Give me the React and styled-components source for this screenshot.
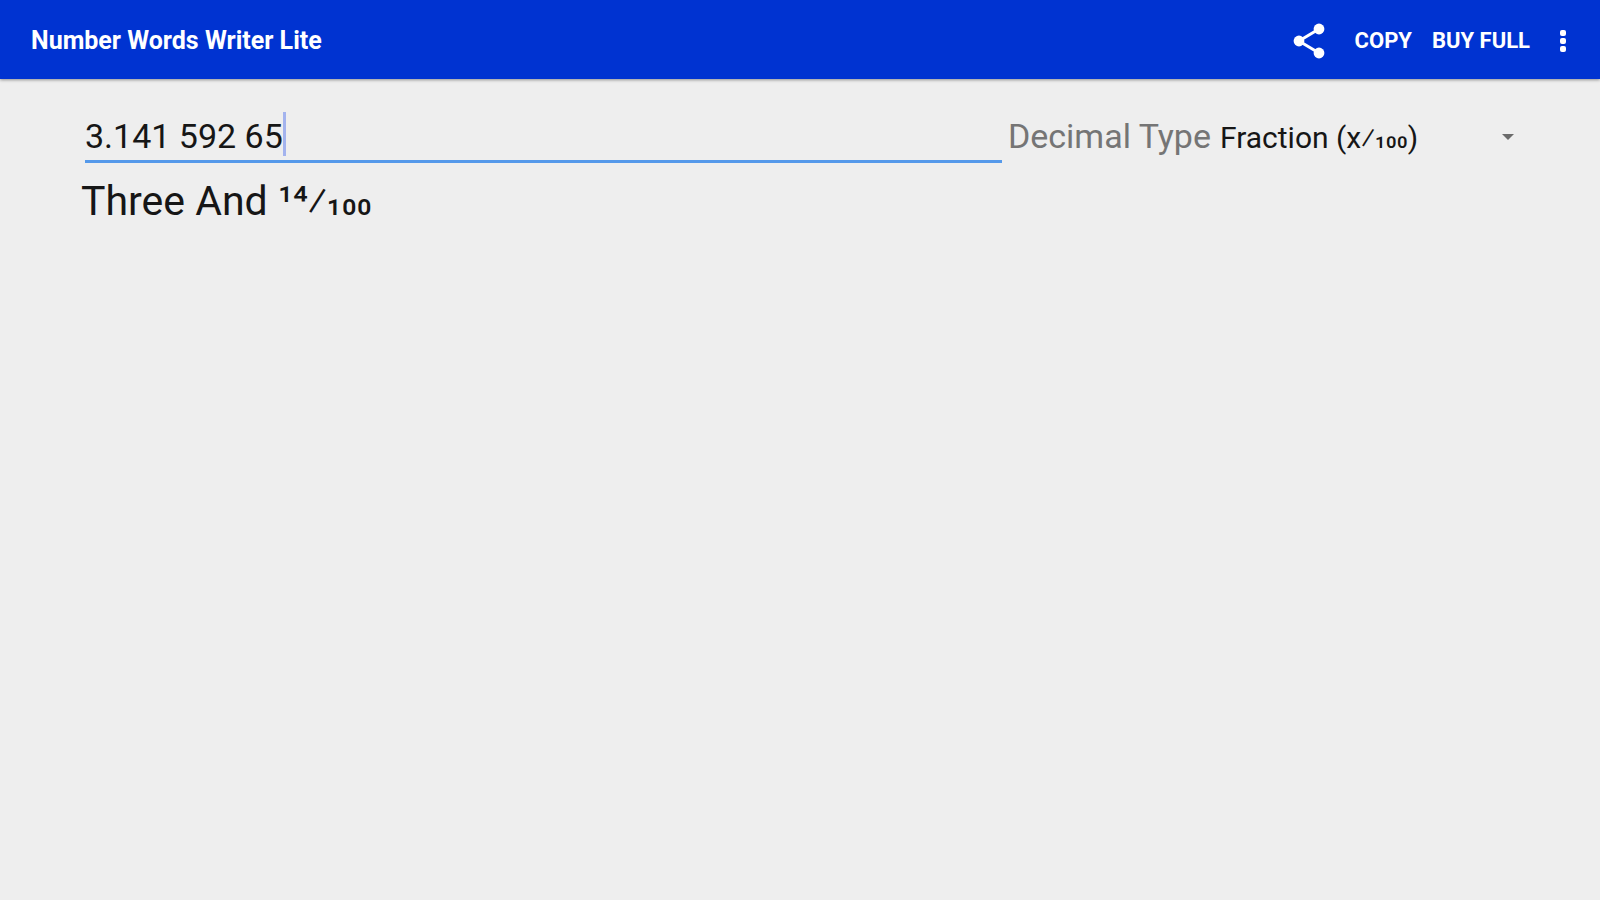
import React, { useEffect, useRef, useState } from "react";
import styled, { createGlobalStyle } from "styled-components";

const GlobalStyle = createGlobalStyle`
  * {
    box-sizing: border-box;
  }

  body {
    margin: 0;
    background: #eeeeee;
    color: #161616;
    font-family: Roboto, "Noto Sans", sans-serif;
  }
`;

const Toolbar = styled.header`
  display: flex;
  align-items: center;
  height: 79px;
  padding: 2px 14px 0 31px;
  background: #0033d1;
  color: #fff;
  box-shadow: 0 1px 3px rgba(0, 0, 0, 0.4);
`;

const Title = styled.h1`
  flex: 1;
  margin: 0;
  font-size: 25px;
  font-weight: 700;
  line-height: 32px;
`;

const Action = styled.button`
  display: flex;
  align-items: center;
  height: 56px;
  padding: 0 10px;
  border: 0;
  background: none;
  color: inherit;
  font-family: inherit;
  font-size: 22px;
  font-weight: 700;
  line-height: 28px;
  text-transform: uppercase;
  cursor: pointer;
`;

const IconAction = styled(Action)`
  padding: 0 20px;
`;

const Content = styled.main`
  padding: 33px 86px 33px 81px;
`;

const Row = styled.div`
  display: flex;
  align-items: flex-start;
`;

const NumberField = styled.div`
  display: flex;
  flex: 1;
  min-width: 0;
  height: 51px;
  margin-left: 4px;
  border-bottom: 3px solid #5599ea;
  cursor: text;
`;

const NumberInput = styled.input`
  field-sizing: content;
  min-width: 0;
  height: 48px;
  padding: 0;
  border: 0;
  outline: none;
  background: none;
  color: inherit;
  caret-color: transparent;
  font-family: inherit;
  font-size: 34px;
`;

// thick caret, the native one can't be made wider
const Caret = styled.span`
  width: 3px;
  height: 44px;
  background: #a3b3ee;
`;

const TypeLabel = styled.label`
  padding-left: 6px;
  color: #757575;
  font-size: 34px;
  line-height: 48px;
`;

const SelectBox = styled.div`
  display: flex;
  align-items: center;
  width: 294px;
  height: 50px;
  margin-left: 9px;
`;

const TypeSelect = styled.select`
  flex: 1;
  min-width: 0;
  height: 50px;
  padding: 0;
  border: 0;
  outline: none;
  appearance: none;
  background: none;
  color: inherit;
  font-family: inherit;
  font-size: 30px;
  font-feature-settings: "dnom";
`;

const Result = styled.output`
  display: block;
  margin-top: 10px;
  font-size: 41px;
  font-variant-numeric: diagonal-fractions;
  line-height: 56px;
`;

const ShareIcon = () => (
  <svg width="32" height="36" viewBox="0 0 32 36" fill="#fff" aria-hidden="true">
    <path d="M26 6 6 18l20 12" fill="none" stroke="#fff" strokeWidth="3" />
    <circle cx="26" cy="6" r="5.4" />
    <circle cx="6" cy="18" r="5.4" />
    <circle cx="26" cy="30" r="5.4" />
  </svg>
);

const MoreIcon = () => (
  <svg width="6" height="22" viewBox="0 0 6 22" fill="#fff" aria-hidden="true">
    <rect width="6" height="6" rx="2" />
    <rect y="8" width="6" height="6" rx="2" />
    <rect y="16" width="6" height="6" rx="2" />
  </svg>
);

const ArrowIcon = () => (
  <svg width="12" height="6" viewBox="0 0 12 6" fill="#6b6b6b" aria-hidden="true">
    <path d="M0 0h12L6 6z" />
  </svg>
);

function App() {
  const [number, setNumber] = useState("3.141 592 65");
  const [decimalType, setDecimalType] = useState("fraction");
  const inputRef = useRef(null);

  useEffect(() => {
    const input = inputRef.current;
    input.focus();
    input.setSelectionRange(input.value.length, input.value.length);
  }, []);

  return (
    <>
      <GlobalStyle />
      <Toolbar>
        <Title>Number Words Writer Lite</Title>
        <IconAction type="button" aria-label="Share">
          <ShareIcon />
        </IconAction>
        <Action type="button">Copy</Action>
        <Action type="button">Buy full</Action>
        <IconAction type="button" aria-label="More options">
          <MoreIcon />
        </IconAction>
      </Toolbar>
      <Content>
        <Row>
          <NumberField onClick={() => inputRef.current.focus()}>
            <NumberInput
              ref={inputRef}
              id="number"
              aria-label="Number"
              value={number}
              onChange={({ target }) => setNumber(target.value)}
            />
            <Caret />
          </NumberField>
          <TypeLabel htmlFor="decimalType">Decimal Type</TypeLabel>
          <SelectBox>
            <TypeSelect
              id="decimalType"
              value={decimalType}
              onChange={({ target }) => setDecimalType(target.value)}
            >
              <option value="fraction">Fraction (x⁄100)</option>
            </TypeSelect>
            <ArrowIcon />
          </SelectBox>
        </Row>
        <Result htmlFor="number decimalType">Three And 14⁄100</Result>
      </Content>
    </>
  );
}

export default App;
